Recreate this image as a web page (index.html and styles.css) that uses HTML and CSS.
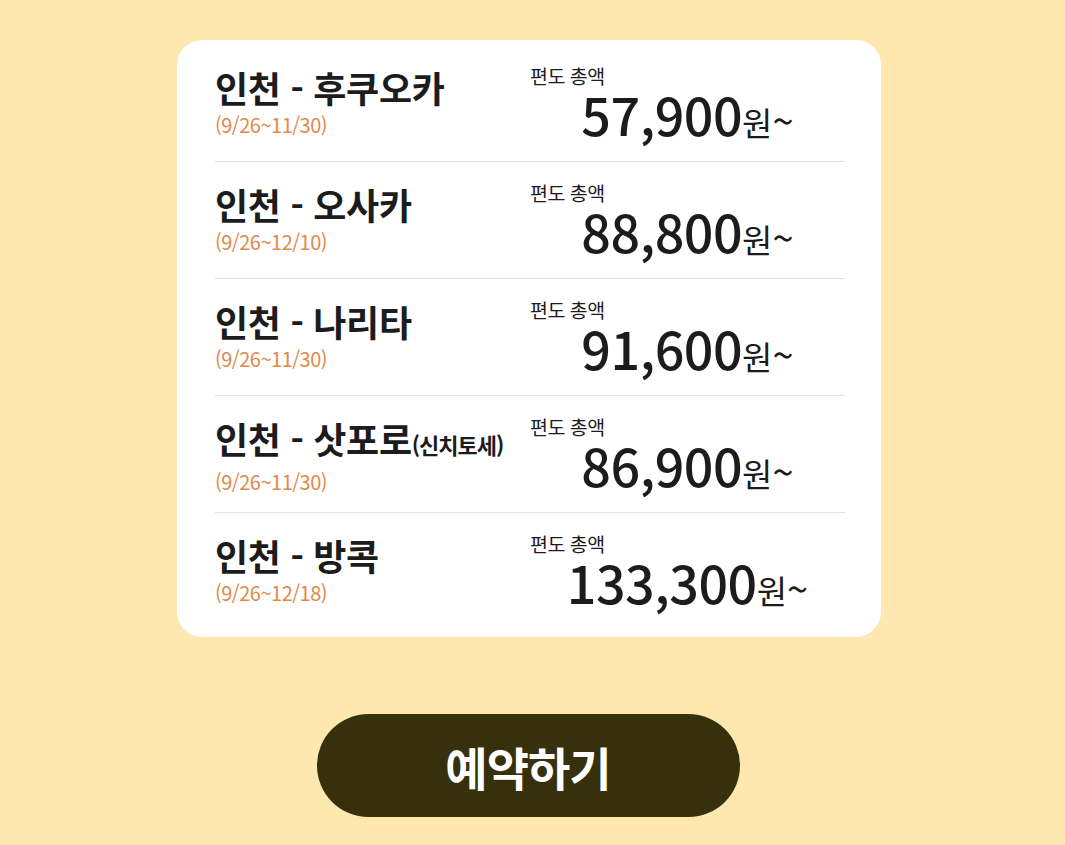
FILE: index.html
```html
<!DOCTYPE html>
<html lang="ko">
<head>
<meta charset="utf-8">
<link rel="stylesheet" href="styles.css">
</head>
<body>
<div class="page">
  <div class="card">
    <div class="row">
      <div class="route">
        <div class="title">인천 - 후쿠오카</div>
        <div class="date">(9/26~11/30)</div>
      </div>
      <div class="price">
        <div class="label">편도 총액</div>
        <div class="amount"><span class="num">57,900</span><span class="won">원<span class="tilde">~</span></span></div>
      </div>
    </div>
    <div class="row">
      <div class="route">
        <div class="title">인천 - 오사카</div>
        <div class="date">(9/26~12/10)</div>
      </div>
      <div class="price">
        <div class="label">편도 총액</div>
        <div class="amount"><span class="num">88,800</span><span class="won">원<span class="tilde">~</span></span></div>
      </div>
    </div>
    <div class="row">
      <div class="route">
        <div class="title">인천 - 나리타</div>
        <div class="date">(9/26~11/30)</div>
      </div>
      <div class="price">
        <div class="label">편도 총액</div>
        <div class="amount"><span class="num">91,600</span><span class="won">원<span class="tilde">~</span></span></div>
      </div>
    </div>
    <div class="row">
      <div class="route">
        <div class="title">인천 - 삿포로<span class="sub">(신치토세)</span></div>
        <div class="date">(9/26~11/30)</div>
      </div>
      <div class="price">
        <div class="label">편도 총액</div>
        <div class="amount"><span class="num">86,900</span><span class="won">원<span class="tilde">~</span></span></div>
      </div>
    </div>
    <div class="row">
      <div class="route">
        <div class="title">인천 - 방콕</div>
        <div class="date">(9/26~12/18)</div>
      </div>
      <div class="price">
        <div class="label">편도 총액</div>
        <div class="amount"><span class="num">133,300</span><span class="won">원<span class="tilde">~</span></span></div>
      </div>
    </div>
  </div>
  <div class="actions">
    <button class="book">예약하기</button>
  </div>
</div>
</body>
</html>
```

FILE: styles.css
```css
html, body {
  margin: 0;
  padding: 0;
}
body {
  background: #fee8b0;
  font-family: "Noto Sans CJK KR", "Noto Sans", sans-serif;
  color: #1c1c1c;
  height: 845px;
  overflow: hidden;
}
.page {
  width: 704px;
  margin: 0 0 0 177px;
  padding-top: 40px;
}
.card {
  background: #fff;
  border-radius: 25px;
  padding: 5px 36px 6px 38px;
}
.row {
  display: grid;
  grid-template-columns: 1fr 1fr;
  height: 117px;
  box-sizing: border-box;
  border-bottom: 1px solid #e2e2e2;
}
.row:last-child {
  border-bottom: none;
  height: 118px;
}
.route {
  padding-top: 22px;
}
.title {
  font-size: 36px;
  font-weight: 700;
  line-height: 40px;
  letter-spacing: -0.3px;
  white-space: nowrap;
}
.sub {
  font-size: 22px;
  letter-spacing: -1px;
}
.date {
  margin-top: 6px;
  font-size: 20px;
  line-height: 24px;
  color: #de8a4b;
  letter-spacing: -0.5px;
}
.price {
  padding-top: 20px;
}
.label {
  font-size: 19.5px;
  line-height: 22px;
  letter-spacing: -0.5px;
}
.amount {
  text-align: center;
  line-height: 52px;
  margin-top: 1px;
  white-space: nowrap;
}
.num {
  font-size: 52px;
  font-weight: 500;
  letter-spacing: -0.5px;
}
.won {
  font-size: 33px;
}
.tilde {
  font-size: 38px;
}
.actions {
  display: flex;
  justify-content: center;
  padding-top: 77px;
  padding-right: 2px;
}
.book {
  width: 423px;
  height: 103px;
  border: none;
  border-radius: 52px;
  background: #36300c;
  color: #fff;
  font-family: inherit;
  font-size: 46px;
  font-weight: 700;
  letter-spacing: -1px;
  padding: 0;
}
```
